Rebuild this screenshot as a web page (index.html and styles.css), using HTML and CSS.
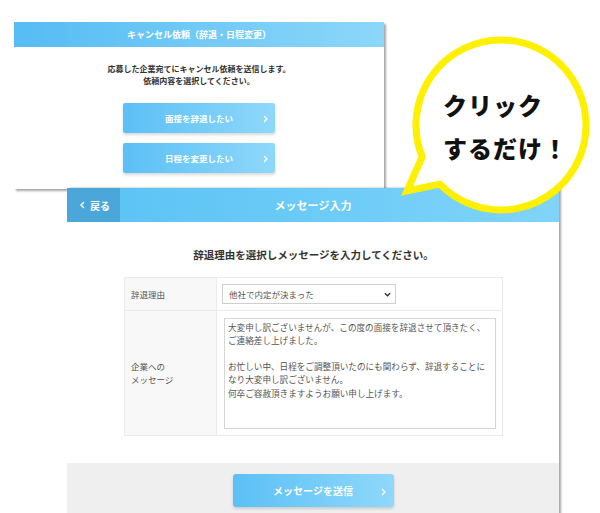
FILE: index.html
```html
<!DOCTYPE html>
<html lang="ja">
<head>
<meta charset="utf-8">
<title>キャンセル依頼</title>
<link rel="stylesheet" href="styles.css">
</head>
<body>
<div class="desk">
  <section class="win win-cancel">
    <header class="cancel-head">キャンセル依頼（辞退・日程変更）</header>
    <div class="cancel-body">
      <p class="lead">応募した企業宛てにキャンセル依頼を送信します。<br>依頼内容を選択してください。</p>
      <div class="choices">
        <button class="btn btn-choice">面接を辞退したい<svg class="chev" viewBox="0 0 5 8"><polyline points="1,1 4,4 1,7" fill="none" stroke="#fff" stroke-width="1.2"/></svg></button>
        <button class="btn btn-choice">日程を変更したい<svg class="chev" viewBox="0 0 5 8"><polyline points="1,1 4,4 1,7" fill="none" stroke="#fff" stroke-width="1.2"/></svg></button>
      </div>
    </div>
  </section>

  <section class="win win-msg">
    <header class="msg-head">
      <button class="back"><svg class="back-chev" viewBox="0 0 5 8"><polyline points="4,1 1,4 4,7" fill="none" stroke="#fff" stroke-width="1.4"/></svg>戻る</button>
      <h2 class="msg-title-bar">メッセージ入力</h2>
      <span class="head-spacer"></span>
    </header>
    <div class="msg-body">
      <p class="msg-title">辞退理由を選択しメッセージを入力してください。</p>
      <table class="form">
        <tr class="row-reason">
          <th>辞退理由</th>
          <td>
            <div class="select-wrap">
              <select class="select"><option>他社で内定が決まった</option></select>
              <svg class="select-chev" viewBox="0 0 8 5"><polyline points="1,1 4,4 7,1" fill="none" stroke="#333" stroke-width="1.6"/></svg>
            </div>
          </td>
        </tr>
        <tr class="row-msg">
          <th>企業への<br>メッセージ</th>
          <td><textarea class="message" wrap="off">大変申し訳ございませんが、この度の面接を辞退させて頂きたく、
ご連絡差し上げました。

お忙しい中、日程をご調整頂いたのにも関わらず、辞退することに
なり大変申し訳ございません。
何卒ご容赦頂きますようお願い申し上げます。</textarea></td>
        </tr>
      </table>
    </div>
    <footer class="msg-foot">
      <button class="btn btn-send">メッセージを送信<svg class="chev chev-send" viewBox="0 0 5 8"><polyline points="1,1 4,4 1,7" fill="none" stroke="#fff" stroke-width="1.2"/></svg></button>
    </footer>
  </section>

  <div class="bubble">
    <svg class="bubble-shape" viewBox="0 0 210 200" width="210" height="200">
      <path d="M32.2,126.9 A85,85 0 1 1 49.9,154.1 L17,161 Z" fill="#fff" stroke="#fff000" stroke-width="7" stroke-linejoin="miter" stroke-miterlimit="10"/>
    </svg>
    <p class="bubble-text">クリック<br>するだけ！</p>
  </div>
</div>
</body>
</html>
```
FILE: styles.css
```css
* { box-sizing: border-box; }
body {
  margin: 0;
  background: #fff;
  font-family: "Noto Sans CJK JP", "Noto Sans", sans-serif;
}
.desk {
  position: relative;
  width: 600px;
  height: 513px;
  overflow: hidden;
}
.win {
  position: absolute;
  background: #fff;
  display: flex;
  flex-direction: column;
}
.win-cancel {
  left: 14px;
  top: 22px;
  width: 370px;
  height: 167px;
  box-shadow: 2px 2px 2px rgba(0, 0, 0, 0.35);
}
.cancel-head {
  height: 25px;
  display: flex;
  align-items: center;
  justify-content: center;
  background: linear-gradient(90deg, #56bcf4, #8cd7f9);
  color: #fff;
  font-size: 9px;
  font-weight: 700;
}
.cancel-body {
  padding-top: 16px;
  display: flex;
  flex-direction: column;
  align-items: center;
}
.lead {
  margin: 0;
  font-size: 8px;
  line-height: 12px;
  font-weight: 700;
  color: #333;
  text-align: center;
}
.choices {
  margin-top: 16px;
  display: flex;
  flex-direction: column;
  gap: 10px;
}
.btn {
  position: relative;
  border: 0;
  border-radius: 2px;
  background: linear-gradient(90deg, #5bc0f6, #8fd8fa);
  color: #fff;
  font-family: "Noto Sans CJK JP", "Noto Sans", sans-serif;
  font-weight: 700;
  box-shadow: 0 2px 3px rgba(0, 0, 0, 0.15);
  padding: 0;
}
.btn-choice {
  width: 152px;
  height: 30px;
  font-size: 8.5px;
}
.chev {
  position: absolute;
  right: 7px;
  top: 50%;
  width: 5px;
  height: 8px;
  margin-top: -3px;
}

.win-msg {
  left: 67px;
  top: 188px;
  width: 492px;
  height: 340px;
  box-shadow: 2px 0 2px rgba(0, 0, 0, 0.35);
}
.msg-head {
  height: 34px;
  display: grid;
  grid-template-columns: 53px 1fr 53px;
  background: linear-gradient(90deg, #58c2f5, #80d4f9);
}
.back {
  border: 0;
  padding: 0 0 0 13px;
  background: #4ba7d9;
  color: #fff;
  font-family: "Noto Sans CJK JP", "Noto Sans", sans-serif;
  font-size: 10px;
  font-weight: 700;
  display: flex;
  align-items: center;
  gap: 5px;
}
.back-chev {
  width: 5px;
  height: 8px;
}
.msg-title-bar {
  margin: 0;
  display: flex;
  align-items: center;
  justify-content: center;
  color: #fff;
  font-size: 11px;
  font-weight: 700;
}
.msg-body {
  padding: 25px 56px 27px 57px;
  display: flex;
  flex-direction: column;
  align-items: stretch;
}
.msg-title {
  margin: 0 0 14px;
  font-size: 10.5px;
  line-height: 16px;
  font-weight: 700;
  color: #333;
  text-align: center;
}
.form {
  width: 379px;
  border-collapse: collapse;
  font-size: 8.5px;
}
.form th,
.form td {
  border: 1px solid #ebebeb;
  vertical-align: middle;
}
.form th {
  width: 94px;
  background: #f8f8f8;
  text-align: left;
  padding: 0 0 0 6px;
  font-size: 8.5px;
  line-height: 13px;
  font-weight: 400;
  color: #555;
}
.form td {
  padding: 0 6px 0 5px;
  line-height: 0;
}
.row-reason {
  height: 33px;
}
.row-msg {
  height: 125px;
}
.select-wrap {
  position: relative;
  width: 174px;
  height: 20px;
}
.select {
  display: block;
  appearance: none;
  -webkit-appearance: none;
  width: 100%;
  height: 100%;
  border: 1px solid #cfcfcf;
  border-radius: 0;
  background: #fff;
  padding: 0 0 0 6px;
  font-family: "Noto Sans CJK JP", "Noto Sans", sans-serif;
  font-size: 8.5px;
  line-height: 18px;
  color: #555;
}
.select-chev {
  position: absolute;
  right: 5px;
  top: 8px;
  width: 7px;
  height: 5px;
}
.message {
  display: block;
  width: 272px;
  height: 111px;
  margin-left: 2px;
  border: 1px solid #d6d6d6;
  padding: 2px 3px;
  resize: none;
  overflow: hidden;
  font-family: "Noto Sans CJK JP", "Noto Sans", sans-serif;
  font-size: 8.6px;
  line-height: 13.2px;
  color: #555;
  white-space: pre;
}
.msg-foot {
  height: 60px;
  background: #efefef;
  padding-top: 11px;
  display: flex;
  justify-content: center;
  align-items: flex-start;
}
.btn-send {
  width: 161px;
  height: 33px;
  font-size: 10px;
  border-radius: 3px;
}
.chev-send {
  right: 8px;
}

.bubble {
  position: absolute;
  left: 390px;
  top: 30px;
  width: 210px;
  height: 200px;
}
.bubble-shape {
  position: absolute;
  left: 0;
  top: 0;
}
.bubble-text {
  position: relative;
  margin: 0;
  padding: 53px 0 0 53px;
  font-size: 24px;
  line-height: 43px;
  font-weight: 900;
  color: #111;
  letter-spacing: 1px;
}
```
